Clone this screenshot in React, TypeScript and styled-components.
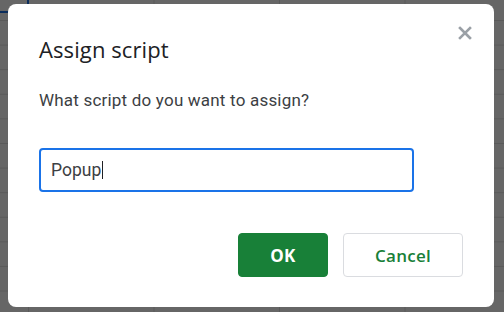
import React from 'react';
import styled, { createGlobalStyle } from 'styled-components';

const GlobalStyle = createGlobalStyle`
    html, body {
        margin: 0;
        padding: 0;
        width: 504px;
        height: 312px;
        overflow: hidden;
    }
    body {
        font-family: Roboto, 'Liberation Sans', Arial, sans-serif;
    }
`;

// dimmed spreadsheet behind the modal
const Backdrop = styled.div`
    position: relative;
    width: 504px;
    height: 312px;
    box-sizing: border-box;
    padding: 4px 10px 0 8px;
    background-color: #666666;
    background-image: linear-gradient(to right, #5a5a5a 1px, transparent 1px),
        linear-gradient(to bottom, #5a5a5a 1px, transparent 1px);
    background-size: 125.5px 100%, 100% 24.6px;
    background-position: 28px 0, 0 20px;
`;

const SelectedCell = styled.div`
    position: absolute;
    left: -2px;
    top: -20px;
    width: 27px;
    height: 29px;
    border: 2px solid #0b2d5c;
`;

const Dialog = styled.div`
    position: relative;
    width: 486px;
    height: 303px;
    box-sizing: border-box;
    padding: 31px 31px 0 31px;
    background: #fff;
    border-radius: 8px;
    display: flex;
    flex-direction: column;
`;

const Close = styled.button`
    position: absolute;
    top: 17px;
    right: 17px;
    width: 24px;
    height: 24px;
    padding: 0;
    border: none;
    background: none;
    display: flex;
    align-items: center;
    justify-content: center;
    cursor: pointer;
`;

const Title = styled.h1`
    margin: 0;
    font-family: 'Open Sans', Roboto, sans-serif;
    font-weight: 400;
    font-size: 22px;
    line-height: 28px;
    color: #202124;
    letter-spacing: 0.1px;
`;

const Prompt = styled.p`
    margin: 26px 0 0;
    font-size: 17px;
    line-height: 22px;
    letter-spacing: 0.2px;
    color: #3c4043;
`;

const Field = styled.div`
    margin-top: 37px;
    width: 375px;
    height: 44px;
    box-sizing: border-box;
    border: 2px solid #1a73e8;
    border-radius: 4px;
    display: flex;
    align-items: center;
    padding-left: 10px;
    font-size: 17.5px;
    color: #3c4043;
`;

const Caret = styled.span`
    display: inline-block;
    width: 1px;
    height: 18px;
    margin-left: 1px;
    background: #202124;
`;

const Actions = styled.div`
    margin-top: 41px;
    display: flex;
    justify-content: flex-end;
    gap: 15px;
`;

const Btn = styled.button<{ primary?: boolean }>`
    height: 44px;
    width: ${(p) => (p.primary ? '90px' : '120px')};
    box-sizing: border-box;
    border-radius: 4px;
    border: 1px solid ${(p) => (p.primary ? '#188038' : '#dadce0')};
    background: ${(p) => (p.primary ? '#188038' : '#fff')};
    color: ${(p) => (p.primary ? '#fff' : '#188038')};
    font-family: 'Open Sans', Roboto, sans-serif;
    font-size: 17px;
    font-weight: ${(p) => (p.primary ? 700 : 600)};
    letter-spacing: 0.3px;
    padding: 0;
    cursor: pointer;
`;

const App: React.FC = () => {
    return (
        <>
            <GlobalStyle />
            <Backdrop>
                <SelectedCell />
                <Dialog>
                    <Close aria-label="Close">
                        <svg width="14" height="14" viewBox="0 0 14 14">
                            <path d="M2 2 L12 12 M12 2 L2 12" stroke="#9aa0a6" strokeWidth="2.6" strokeLinecap="square" />
                        </svg>
                    </Close>
                    <Title>Assign script</Title>
                    <Prompt>What script do you want to assign?</Prompt>
                    <Field>
                        Popup
                        <Caret />
                    </Field>
                    <Actions>
                        <Btn primary>OK</Btn>
                        <Btn>Cancel</Btn>
                    </Actions>
                </Dialog>
            </Backdrop>
        </>
    );
};

export default App;
